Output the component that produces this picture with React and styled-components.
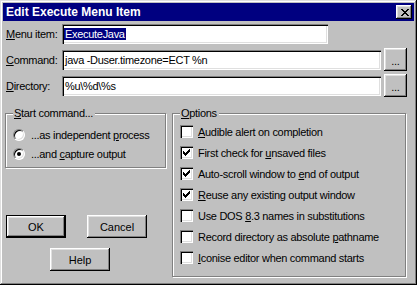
import React from "react";
import styled, { createGlobalStyle } from "styled-components";

const GlobalStyle = createGlobalStyle`
  html, body {
    margin: 0;
    padding: 0;
    background: #c0c0c0;
  }
  * {
    box-sizing: border-box;
  }
`;

const options = [
  { pre: "", key: "A", post: "udible alert on completion", checked: false },
  { pre: "First check for ", key: "u", post: "nsaved files", checked: true },
  { pre: "Auto-scroll window to ", key: "e", post: "nd of output", checked: true },
  { pre: "", key: "R", post: "euse any existing output window", checked: true },
  { pre: "Use DOS ", key: "8", post: ".3 names in substitutions", checked: false },
  { pre: "Record directory as absolute ", key: "p", post: "athname", checked: false },
  { pre: "", key: "I", post: "conise editor when command starts", checked: false },
];

const CloseGlyph = () => (
  <svg width="8" height="7" viewBox="0 0 8 7" shapeRendering="crispEdges">
    <path
      fill="#000"
      d="M0 0h2v1H0zM6 0h2v1H6zM1 1h2v1H1zM5 1h2v1H5zM2 2h4v1H2zM3 3h2v1H3zM2 4h4v1H2zM1 5h2v1H1zM5 5h2v1H5zM0 6h2v1H0zM6 6h2v1H6z"
    />
  </svg>
);

const CheckGlyph = () => (
  <svg width="7" height="7" viewBox="0 0 7 7" shapeRendering="crispEdges">
    <path
      fill="#000"
      d="M6 0h1v1H6zM5 1h2v1H5zM0 2h1v1H0zM4 2h3v1H4zM0 3h2v1H0zM3 3h3v1H3zM0 4h5v1H0zM1 5h3v1H1zM2 6h1v1H2z"
    />
  </svg>
);

export default function App() {
  return (
    <>
      <GlobalStyle />
      <Dialog>
        <TitleBar>
          <Title>Edit Execute Menu Item</Title>
          <CloseButton>
            <CloseGlyph />
          </CloseButton>
        </TitleBar>
        <Body>
          <Fields>
            <FieldRow>
              <Label>
                <Key>M</Key>enu item:
              </Label>
              <TextBox $width={266}>
                <Selected>ExecuteJava</Selected>
              </TextBox>
            </FieldRow>
            <FieldRow>
              <Label>
                <Key>C</Key>ommand:
              </Label>
              <TextBox $width={319}>java -Duser.timezone=ECT %n</TextBox>
              <BrowseButton>...</BrowseButton>
            </FieldRow>
            <FieldRow>
              <Label>
                <Key>D</Key>irectory:
              </Label>
              <TextBox $width={319}>%u\%d\%s</TextBox>
              <BrowseButton>...</BrowseButton>
            </FieldRow>
          </Fields>

          <Lower>
            <LeftColumn>
              <GroupBox $width={161} $height={55}>
                <Legend>
                  <Key>S</Key>tart command...
                </Legend>
                <RadioList>
                  <OptionRow>
                    <Radio />
                    <span>
                      ...as independent <Key>p</Key>rocess
                    </span>
                  </OptionRow>
                  <OptionRow>
                    <Radio>
                      <Dot />
                    </Radio>
                    <span>
                      ...and <Key>c</Key>apture output
                    </span>
                  </OptionRow>
                </RadioList>
              </GroupBox>
              <ButtonRow>
                <PushButton $isDefault>OK</PushButton>
                <PushButton>Cancel</PushButton>
              </ButtonRow>
              <HelpRow>
                <PushButton>Help</PushButton>
              </HelpRow>
            </LeftColumn>

            <GroupBox $width={234} $height={164}>
              <Legend>
                <Key>O</Key>ptions
              </Legend>
              <CheckList>
                {options.map((o, i) => (
                  <OptionRow key={i}>
                    <CheckBox>{o.checked && <CheckGlyph />}</CheckBox>
                    <span>
                      {o.pre}
                      <Key>{o.key}</Key>
                      {o.post}
                    </span>
                  </OptionRow>
                ))}
              </CheckList>
            </GroupBox>
          </Lower>
        </Body>
      </Dialog>
    </>
  );
}

const Dialog = styled.div`
  width: 417px;
  height: 285px;
  padding: 3px;
  display: flex;
  flex-direction: column;
  background: #c0c0c0;
  box-shadow: inset -1px -1px #000, inset 1px 1px #dfdfdf,
    inset -2px -2px #808080, inset 2px 2px #fff;
  font-family: "Liberation Sans", Arial, sans-serif;
  font-size: 11px;
  letter-spacing: -0.3px;
  color: #000;
`;

const TitleBar = styled.div`
  height: 18px;
  display: flex;
  align-items: center;
  justify-content: space-between;
  padding: 0 2px 0 3px;
  background: #000080;
`;

const Title = styled.div`
  color: #fff;
  font-weight: bold;
  font-size: 12px;
  letter-spacing: 0;
`;

const CloseButton = styled.div`
  width: 16px;
  height: 14px;
  display: flex;
  align-items: center;
  justify-content: center;
  padding-left: 1px;
  background: #c0c0c0;
  box-shadow: inset -1px -1px #000, inset 1px 1px #fff,
    inset -2px -2px #808080, inset 2px 2px #dfdfdf;
`;

const Body = styled.div`
  padding: 3px 0 0 3px;
`;

const Fields = styled.div`
  display: flex;
  flex-direction: column;
  gap: 6px;
`;

const FieldRow = styled.div`
  height: 20px;
  display: flex;
  align-items: center;
`;

const Label = styled.div`
  width: 56px;
`;

const Key = styled.span`
  text-decoration: underline;
  text-underline-offset: 1px;
`;

const TextBox = styled.div`
  width: ${({ $width }) => $width}px;
  height: 20px;
  display: flex;
  align-items: center;
  padding: 0 3px;
  background: #fff;
  white-space: nowrap;
  box-shadow: inset 1px 1px #808080, inset 2px 2px #000,
    inset -1px -1px #fff, inset -2px -2px #dfdfdf;
`;

const Selected = styled.span`
  background: #000080;
  color: #fff;
  padding: 0 1px;
  margin-left: -1px;
`;

const Raised = styled.div`
  display: flex;
  align-items: center;
  justify-content: center;
  background: #c0c0c0;
  box-shadow: inset -1px -1px #000, inset 1px 1px #fff,
    inset -2px -2px #808080, inset 2px 2px #dfdfdf;
`;

const BrowseButton = styled(Raised)`
  width: 23px;
  height: 23px;
  margin: -1px 0 0 3px;
  padding-bottom: 3px;
  align-items: flex-end;
  line-height: 14px;
`;

const Lower = styled.div`
  display: flex;
  gap: 6px;
  margin: 17px 0 0 -1px;
`;

const LeftColumn = styled.div`
  display: flex;
  flex-direction: column;
`;

const GroupBox = styled.div`
  position: relative;
  width: ${({ $width }) => $width}px;
  height: ${({ $height }) => $height}px;
  border: 1px solid #808080;
  box-shadow: inset 1px 1px #fff, 1px 1px #fff;
`;

const Legend = styled.div`
  position: absolute;
  top: -7px;
  left: 7px;
  padding: 0 2px 0 1px;
  background: #c0c0c0;
  line-height: 13px;
`;

const RadioList = styled.div`
  display: flex;
  flex-direction: column;
  gap: 6px;
  padding: 14px 0 0 7px;
`;

const CheckList = styled.div`
  display: flex;
  flex-direction: column;
  gap: 8px;
  padding: 11px 0 0 7px;
`;

const OptionRow = styled.div`
  display: flex;
  align-items: center;
  gap: 5px;
  height: 13px;
  white-space: nowrap;
`;

const Radio = styled.div`
  width: 12px;
  height: 12px;
  margin-right: 1px;
  border-radius: 50%;
  display: flex;
  align-items: center;
  justify-content: center;
  background: #fff;
  border: 1px solid;
  border-color: #808080 #fff #fff #808080;
  box-shadow: inset 1px 1px #000, inset -1px -1px #dfdfdf;
`;

const Dot = styled.div`
  width: 4px;
  height: 4px;
  border-radius: 50%;
  background: #000;
`;

const CheckBox = styled.div`
  width: 13px;
  height: 13px;
  display: flex;
  align-items: center;
  justify-content: center;
  background: #fff;
  box-shadow: inset 1px 1px #808080, inset 2px 2px #000,
    inset -1px -1px #fff, inset -2px -2px #dfdfdf;
`;

const ButtonRow = styled.div`
  display: flex;
  gap: 21px;
  margin: 47px 0 0 1px;
`;

const HelpRow = styled.div`
  display: flex;
  margin: 10px 0 0 45px;
`;

const PushButton = styled(Raised)`
  width: 60px;
  height: 23px;
  letter-spacing: 0;
  ${({ $isDefault }) =>
    $isDefault &&
    `
    border: 1px solid #000;
  `}
`;
